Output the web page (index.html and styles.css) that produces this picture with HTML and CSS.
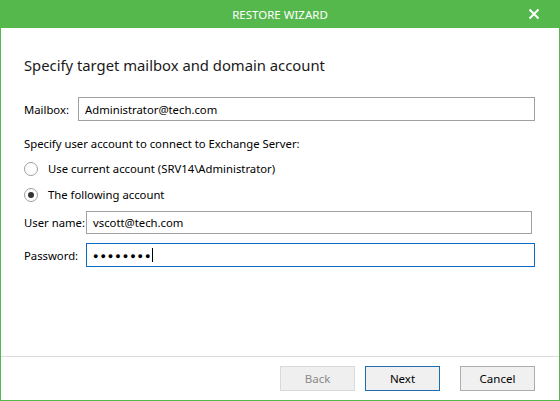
FILE: index.html
```html
<!DOCTYPE html>
<html>
<head>
<meta charset="utf-8">
<link rel="stylesheet" href="styles.css">
</head>
<body>
<div class="window">
  <div class="titlebar">
    <span class="title">RESTORE WIZARD</span>
    <svg class="close" width="12" height="12" viewBox="0 0 12 12"><path d="M1.5 1.5 L10.5 10.5 M10.5 1.5 L1.5 10.5" stroke="#fff" stroke-width="2"/></svg>
  </div>
  <div class="content">
    <h1 class="heading">Specify target mailbox and domain account</h1>
    <div class="row mailbox-row">
      <label class="lbl lbl-mailbox">Mailbox:</label>
      <div class="input">Administrator@tech.com</div>
    </div>
    <p class="section">Specify user account to connect to Exchange Server:</p>
    <div class="radio-row"><span class="radio"></span><span>Use current account (SRV14\Administrator)</span></div>
    <div class="radio-row"><span class="radio checked"></span><span>The following account</span></div>
    <div class="row user-row">
      <label class="lbl lbl-user">User name:</label>
      <div class="input">vscott@tech.com</div>
    </div>
    <div class="row pass-row">
      <label class="lbl lbl-user">Password:</label>
      <div class="input focused"><span class="dots">●●●●●●●●</span><span class="caret"></span></div>
    </div>
  </div>
  <div class="footer">
    <div class="btn disabled">Back</div>
    <div class="btn primary">Next</div>
    <div class="btn cancel">Cancel</div>
  </div>
</div>
</body>
</html>
```
FILE: styles.css
```css
html, body { margin: 0; padding: 0; }
body { width: 560px; height: 401px; font-family: "Noto Sans", "Open Sans", sans-serif; color: #000; background: #fff; }
.window { width: 560px; height: 401px; box-sizing: border-box; border: 1px solid #55b84c; border-top: none; display: flex; flex-direction: column; }
.titlebar { height: 28px; margin: 0 -1px; background: #55b84c; display: flex; align-items: center; justify-content: center; position: relative; }
.title { color: #fff; font-size: 11.5px; }
.close { position: absolute; right: 20px; top: 8px; }
.content { flex: 1; padding: 0 0 0 23px; font-size: 11.3px; }
.heading { font-weight: normal; font-size: 14.8px; margin: 26px 0 0 0; line-height: 22px; color: #1a1a1a; }
.row { display: flex; align-items: center; }
.mailbox-row { margin-top: 21px; }
.lbl { color: #000; white-space: nowrap; flex-shrink: 0; }
.lbl-mailbox { width: 54px; }
.lbl-user { width: 62px; }
.input { flex: 1; height: 24px; box-sizing: border-box; border: 1px solid #a0a0a0; margin-right: 24px; display: flex; align-items: center; padding-left: 6px; white-space: nowrap; }
.user-row .input { margin-right: 27px; height: 23px; }
.section { margin: 15px 0 0 0; line-height: 16px; }
.radio-row { display: flex; align-items: center; gap: 10px; margin-top: 9px; line-height: 16px; }
.radio-row + .radio-row { margin-top: 10px; }
.radio { width: 14px; height: 14px; box-sizing: border-box; border: 1px solid #a0a0a0; border-radius: 50%; position: relative; }
.radio.checked::after { content: ""; position: absolute; left: 3px; top: 3px; width: 6px; height: 6px; border-radius: 50%; background: #333; }
.user-row { margin-top: 8px; }
.pass-row { margin-top: 9px; }
.focused { border-color: #0c6bc7; }
.dots { font-size: 9px; letter-spacing: 2px; }
.caret { width: 1px; height: 14px; background: #000; margin-left: -1px; }
.footer { height: 43px; border-top: 1px solid #dcdcdc; display: flex; justify-content: flex-end; align-items: center; padding-right: 24px; gap: 10px; }
.btn { width: 75px; height: 25px; box-sizing: border-box; border: 1px solid #adadad; background: #f0f0f0; display: flex; align-items: center; justify-content: center; font-size: 11.5px; }
.btn.disabled { border-color: #d9d9d9; color: #8a8a8a; background: #efefef; }
.btn.primary { border-color: #1f6cae; background: #f0f0f0; }
.btn.cancel { margin-left: 10px; }
```
